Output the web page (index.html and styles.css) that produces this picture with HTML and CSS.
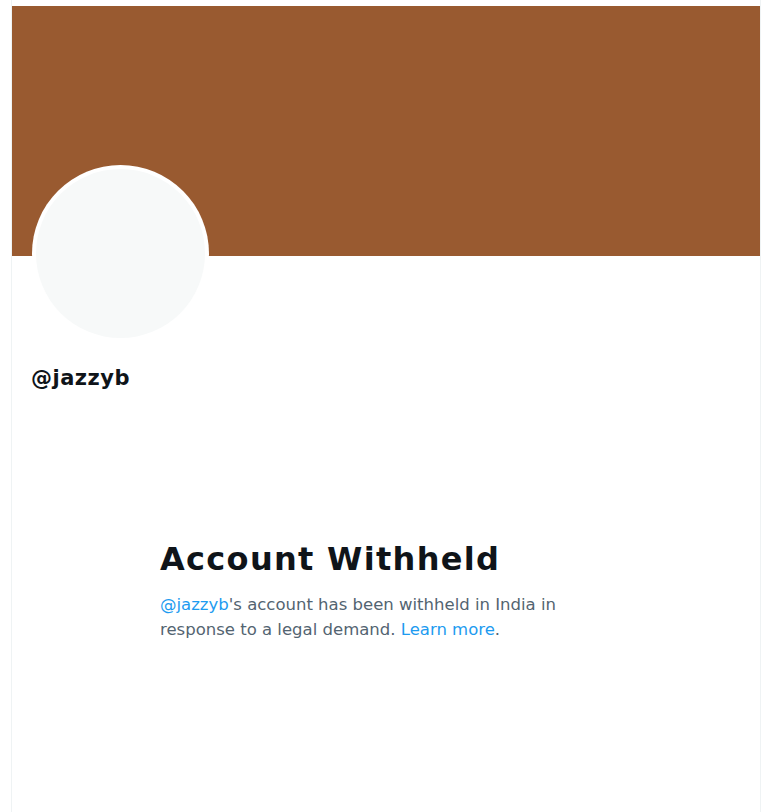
FILE: index.html
```html
<!DOCTYPE html>
<html lang="en">
<head>
  <meta charset="UTF-8" />
  <title>@jazzyb</title>
  <link rel="stylesheet" href="styles.css">
</head>
<body>
  <div class="profile">
    <div class="banner"></div>
    <div class="avatar"><div class="avatar-inner"></div></div>
    <div class="handle">@jazzyb</div>

    <div class="withheld">
      <h1>Account Withheld</h1>
      <p><a href="#">@jazzyb</a>'s account has been withheld in India in response to a legal demand. <a href="#">Learn more</a>.</p>
    </div>
  </div>
</body>
</html>
```

FILE: styles.css
```css
* {
  box-sizing: border-box;
}

body {
  margin: 0;
  padding: 0;
  font-family: 'DejaVu Sans', 'Liberation Sans', sans-serif;
  background: #ffffff;
  color: #0f1419;
}

.profile {
  margin-left: 11px;
  width: 750px;
  min-height: 812px;
  padding-top: 6px;
  border-left: 1px solid #eff3f4;
  border-right: 1px solid #eff3f4;
}

.banner {
  height: 250px;
  background: #995a30;
}

.avatar {
  width: 177px;
  height: 177px;
  margin: -91px 0 0 20px;
  border-radius: 50%;
  background: #ffffff;
  padding: 4px;
}

.avatar-inner {
  width: 100%;
  height: 100%;
  border-radius: 50%;
  background: #f7f9f9;
}

.handle {
  margin: 24px 0 0 19px;
  font-size: 21px;
  font-weight: 700;
  letter-spacing: 0.5px;
  line-height: 24px;
}

.withheld {
  margin: 147px 0 0 148px;
  width: 430px;
}

.withheld h1 {
  margin: 0 0 11px;
  font-size: 32px;
  font-weight: 700;
  letter-spacing: 1.3px;
  line-height: 44px;
}

.withheld p {
  margin: 0;
  font-size: 16.5px;
  line-height: 25px;
  color: #536471;
}

.withheld a {
  color: #1d9bf0;
  text-decoration: none;
}
```
